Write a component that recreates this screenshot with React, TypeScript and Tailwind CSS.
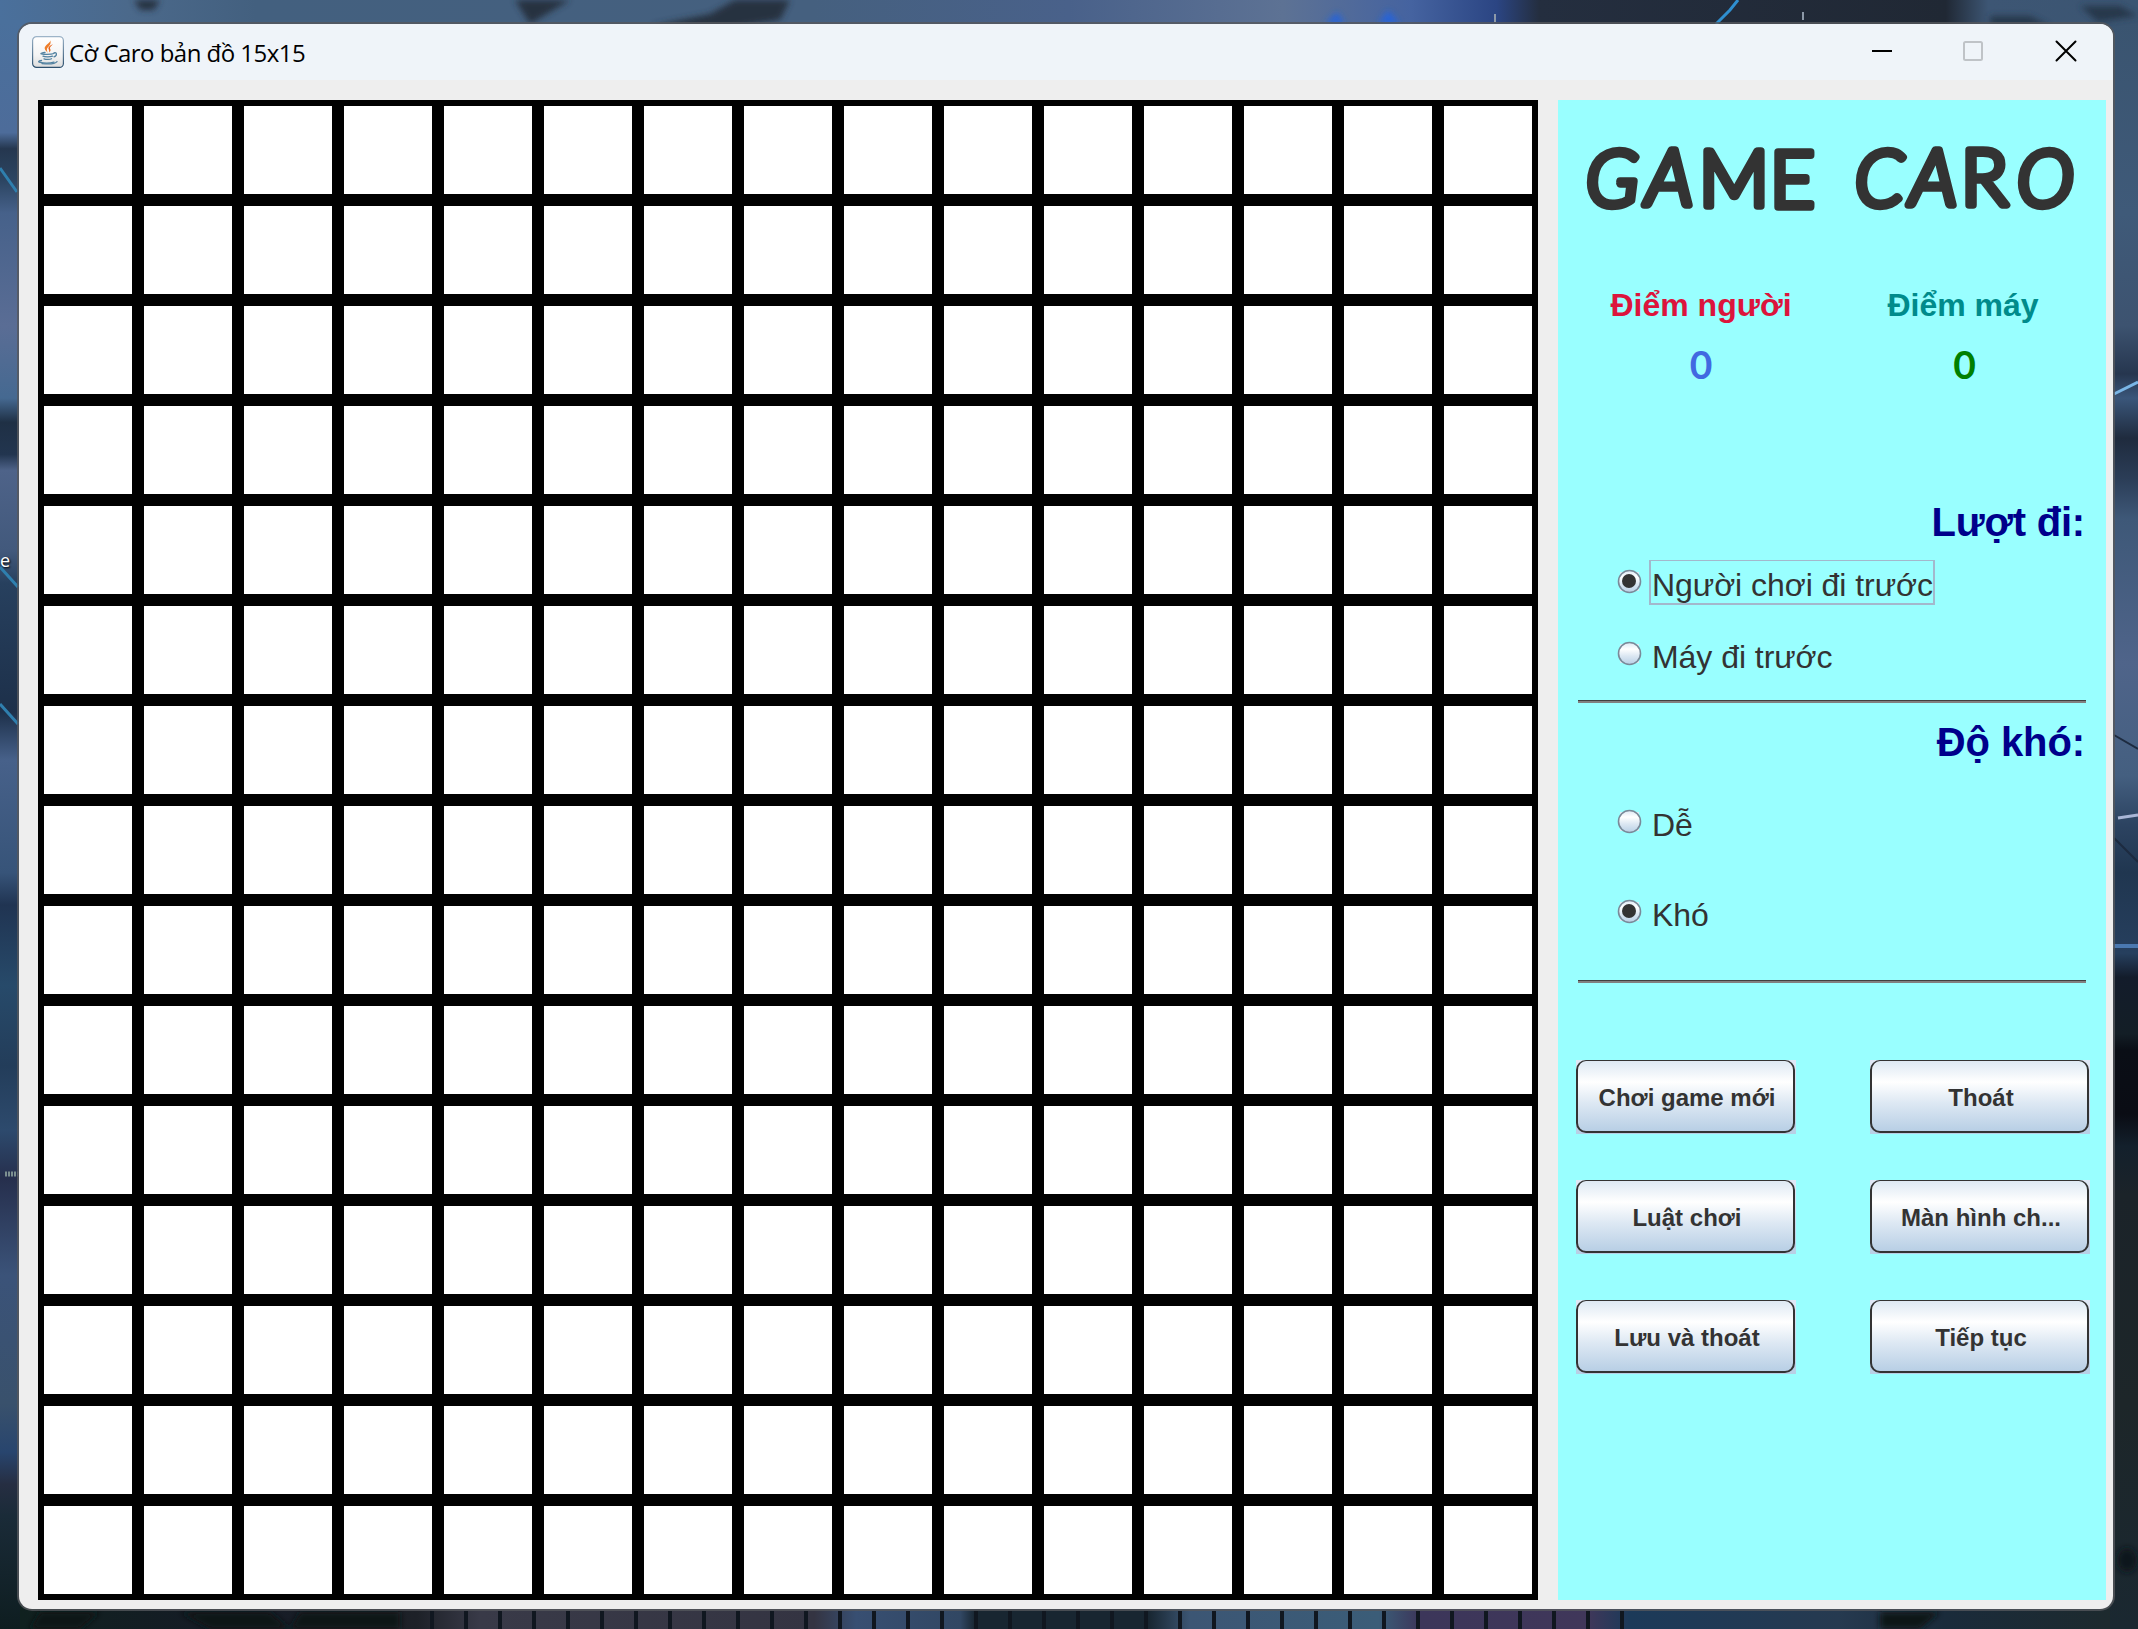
import React from "react";

const CELLS = Array.from({ length: 225 }, (_, i) => i);

const BUTTONS = [
  "Chơi game mới",
  "Thoát",
  "Luật chơi",
  "Màn hình ch...",
  "Lưu và thoát",
  "Tiếp tục",
];

function Wallpaper() {
  const slats = Array.from({ length: 36 }, (_, i) => 430 + i * 34);
  return (
    <svg className="absolute inset-0" width="2138" height="1629" viewBox="0 0 2138 1629" aria-hidden="true">
      <defs>
        <linearGradient id="top" x1="0" x2="1" y1="0" y2="0">
          <stop offset="0" stopColor="#4a709c" />
          <stop offset="0.06" stopColor="#4b698b" />
          <stop offset="0.12" stopColor="#43607f" />
          <stop offset="0.38" stopColor="#45607f" />
          <stop offset="0.5" stopColor="#49618a" />
          <stop offset="0.6" stopColor="#5d7294" />
          <stop offset="0.66" stopColor="#4563a0" />
          <stop offset="0.7" stopColor="#2b4583" />
          <stop offset="0.72" stopColor="#242e3f" />
          <stop offset="0.91" stopColor="#202834" />
          <stop offset="0.93" stopColor="#3d5674" />
          <stop offset="1" stopColor="#3b5572" />
        </linearGradient>
        <linearGradient id="left" x1="0" x2="0" y1="0" y2="1">
          <stop offset="0" stopColor="#4a709c" />
          <stop offset="0.07" stopColor="#4d6c9a" />
          <stop offset="0.08" stopColor="#25374f" />
          <stop offset="0.1" stopColor="#2c4562" />
          <stop offset="0.12" stopColor="#46618a" />
          <stop offset="0.19" stopColor="#5a6d95" />
          <stop offset="0.235" stopColor="#456991" />
          <stop offset="0.25" stopColor="#1f3045" />
          <stop offset="0.27" stopColor="#22354f" />
          <stop offset="0.28" stopColor="#4e6389" />
          <stop offset="0.33" stopColor="#42597c" />
          <stop offset="0.35" stopColor="#27405e" />
          <stop offset="0.43" stopColor="#1d304a" />
          <stop offset="0.46" stopColor="#47618a" />
          <stop offset="0.53" stopColor="#375479" />
          <stop offset="0.55" stopColor="#203452" />
          <stop offset="0.6" stopColor="#274a6a" />
          <stop offset="0.65" stopColor="#233d5a" />
          <stop offset="0.69" stopColor="#2d4a6d" />
          <stop offset="0.72" stopColor="#262f4d" />
          <stop offset="0.78" stopColor="#3b5379" />
          <stop offset="0.86" stopColor="#39516c" />
          <stop offset="0.89" stopColor="#28456e" />
          <stop offset="0.91" stopColor="#262e42" />
          <stop offset="0.93" stopColor="#1a2b38" />
          <stop offset="1" stopColor="#0e1d20" />
        </linearGradient>
        <linearGradient id="right" x1="0" x2="0" y1="0" y2="1">
          <stop offset="0" stopColor="#3a5470" />
          <stop offset="0.12" stopColor="#3f5a79" />
          <stop offset="0.19" stopColor="#3d5370" />
          <stop offset="0.22" stopColor="#26364f" />
          <stop offset="0.235" stopColor="#3a567a" />
          <stop offset="0.26" stopColor="#1f2b3e" />
          <stop offset="0.285" stopColor="#2b3d57" />
          <stop offset="0.31" stopColor="#3e5878" />
          <stop offset="0.4" stopColor="#4f648a" />
          <stop offset="0.47" stopColor="#445f80" />
          <stop offset="0.5" stopColor="#2c4361" />
          <stop offset="0.53" stopColor="#203650" />
          <stop offset="0.58" stopColor="#263f5e" />
          <stop offset="0.595" stopColor="#131c2b" />
          <stop offset="0.63" stopColor="#131e26" />
          <stop offset="0.64" stopColor="#0a0e16" />
          <stop offset="0.68" stopColor="#0a0c14" />
          <stop offset="0.7" stopColor="#13202c" />
          <stop offset="0.73" stopColor="#1b2329" />
          <stop offset="0.86" stopColor="#1d2629" />
          <stop offset="1" stopColor="#1a2831" />
        </linearGradient>
        <linearGradient id="bottom" x1="0" x2="1" y1="0" y2="0">
          <stop offset="0" stopColor="#10211f" />
          <stop offset="0.1" stopColor="#151b26" />
          <stop offset="0.19" stopColor="#1d2128" />
          <stop offset="0.22" stopColor="#393a48" />
          <stop offset="0.38" stopColor="#343442" />
          <stop offset="0.4" stopColor="#384f72" />
          <stop offset="0.45" stopColor="#314763" />
          <stop offset="0.457" stopColor="#182631" />
          <stop offset="0.54" stopColor="#182631" />
          <stop offset="0.56" stopColor="#3c5674" />
          <stop offset="0.65" stopColor="#3b5d78" />
          <stop offset="0.67" stopColor="#3c365a" />
          <stop offset="0.75" stopColor="#40375a" />
          <stop offset="0.77" stopColor="#1c3a59" />
          <stop offset="0.87" stopColor="#263a50" />
          <stop offset="0.92" stopColor="#1a2b3b" />
          <stop offset="1" stopColor="#1d2a2e" />
        </linearGradient>
        <filter id="soft">
          <feGaussianBlur stdDeviation="3" />
        </filter>
      </defs>
      <rect width="2138" height="40" fill="url(#top)" />
      <rect y="20" width="40" height="1609" fill="url(#left)" />
      <rect x="2090" y="20" width="48" height="1609" fill="url(#right)" />
      <rect x="20" y="1590" width="2090" height="39" fill="url(#bottom)" />
      <g filter="url(#soft)">
        <path d="M134 0h26l-6 10h-14z M515 0h55l-20 12-20 12z M735 0h55l-10 20-50 8-80-2 60-12z" fill="#27303f" />
        <path d="M1325 24l12-12 8 12z M1378 24l10-14 12 14z" fill="#2563d8" />
        <path d="M1990 16h40l20 10h-60z M2080 6h40l18 10-40 6z" fill="#27374c" />
        <path d="M40 1612h60l-20 17H30z M180 1612h90l20 17h-80z M300 1612h100v17h-110z" fill="#0d1718" />
        <path d="M1880 1612h60l-20 17h-40z" fill="#0b1816" />
        <ellipse cx="2127" cy="1560" rx="10" ry="12" fill="#10151b" />
      </g>
      <g fill="#101720">
        {slats.map((x) => (
          <rect key={x} x={x} y="1611" width="4" height="18" />
        ))}
      </g>
      <path d="M1738 0l-8 10-14 14" stroke="#2f8fd0" strokeWidth="3" fill="none" />
      <path d="M1495 14v8M1803 12v8" stroke="#8d99a8" strokeWidth="2" />
      <path d="M0 168l17 24M0 567l18 20M0 704l18 20" stroke="#2f7fae" strokeWidth="3" />
      <path d="M2114 394l24-12" stroke="#7ab6e6" strokeWidth="3" />
      <path d="M2118 818l20-3" stroke="#a9b6d6" strokeWidth="3" />
      <path d="M2114 735l24 14M2114 838l24 24" stroke="#1d2b40" strokeWidth="2" />
      <rect x="2112" y="944" width="26" height="4" fill="#4a78b0" />
      <path d="M5 1174h13" stroke="#7c9090" strokeWidth="5" strokeDasharray="2 1" />
      <path d="M2 1500h14" stroke="#b08476" strokeWidth="6" opacity=".8" filter="url(#soft)" />
    </svg>
  );
}

function JavaIcon() {
  return (
    <svg width="32" height="32" viewBox="0 0 32 32" aria-hidden="true">
      <defs>
        <linearGradient id="jbg" x1="0" x2="0" y1="0" y2="1">
          <stop offset="0" stopColor="#ffffff" />
          <stop offset="0.6" stopColor="#f4f4f4" />
          <stop offset="1" stopColor="#dcdcdc" />
        </linearGradient>
        <linearGradient id="jst" x1="0" x2="0" y1="0" y2="1">
          <stop offset="0" stopColor="#9db4c8" />
          <stop offset="1" stopColor="#2d506e" />
        </linearGradient>
      </defs>
      <rect x="0.6" y="0.6" width="30.8" height="30.8" rx="4" fill="url(#jbg)" stroke="url(#jst)" strokeWidth="1.2" />
      <path d="M18.2 4c1 3-6 5-5.500 8.600.2 1.700 2 3 3 4.400-1.300-3.700-1-4.500 1-6.500 1.700-1.800 2.500-3.700 1.500-6.500z" fill="#ee7d28" />
      <path d="M21 8.200c-2.500.8-4.800 2.300-4.600 4.300.1 1.300 1.300 1.600.7 4 1.600-1.300 1.800-2.500 1-3.700-.8-1.300 1-3 2.900-4.600z" fill="#e8641b" />
      <g fill="none" stroke="#5382a1" strokeWidth="1.300" strokeLinecap="round">
        <path d="M13 16.500c-2.500.3-4.500.8-4 1.300 1 .8 10 .8 13-.3" />
        <path d="M22 16.800c3-1 3.500 2.800 0 4" />
        <path d="M11 20.200c2 .9 7 .9 9.500 0" />
        <path d="M12 22.800c2 .8 6 .8 7.500 0" />
        <path d="M9.500 24.500c-3.500.6-3.500 1.500-1.500 1.900 4 .8 10.500.7 14-.3" />
        <path d="M10 27.600c6 .6 13 .4 15-2" />
      </g>
    </svg>
  );
}

function TitleBar() {
  return (
    <header className="flex h-14 items-center bg-[#eff4f9] pl-[13px]">
      <JavaIcon />
      <span className="ml-[5px] whitespace-nowrap pt-px font-['Open_Sans','Noto_Sans',sans-serif] text-[24px] leading-[32px] tracking-[-0.53px] text-black">
        Cờ Caro bản đồ 15x15
      </span>
      <svg className="ml-auto" width="242" height="56" viewBox="0 0 242 56" fill="none" aria-hidden="true">
        <path d="M1 27h20" stroke="#000" strokeWidth="2" />
        <rect x="93" y="18" width="18" height="18" rx="1.500" stroke="#bfc3c7" strokeWidth="2" />
        <path d="M185.500 17.500l19 19M204.500 17.500l-19 19" stroke="#000" strokeWidth="2" strokeLinecap="round" />
      </svg>
    </header>
  );
}

function Board() {
  return (
    <div className="grid h-[1500px] w-[1500px] shrink-0 grid-cols-15 grid-rows-15">
      {CELLS.map((i) => (
        <div key={i} className="border-6 border-black bg-white" />
      ))}
    </div>
  );
}

function GameLogo() {
  return (
    <svg width="548" height="185" viewBox="0 0 548 185" className="shrink-0" aria-label="GAME CARO">
      <text
        x="28 88 141 212 265 297 352 403 459"
        y="106 105 106 107 106 106 105 105 106"
        fill="#333333"
        stroke="#333333"
        strokeWidth="7.5"
        strokeLinejoin="round"
        className="font-['Lato',sans-serif] text-[77px] font-light"
      >
        <tspan fontStyle="italic">GA</tspan>
        <tspan>ME </tspan>
        <tspan fontStyle="italic">CA</tspan>
        <tspan>R</tspan>
        <tspan fontStyle="italic">O</tspan>
      </text>
    </svg>
  );
}

function Radio({ label, checked = false, focused = false }: { label: string; checked?: boolean; focused?: boolean }) {
  return (
    <div className="flex h-[45px] items-start pl-[59px]">
      <svg className="mt-[9px] shrink-0" width="25" height="25" viewBox="0 0 25 25" aria-hidden="true">
        <defs>
          <linearGradient id="radio" x1="0" x2="0" y1="0" y2="1">
            <stop offset="0" stopColor="#dde8f3" />
            <stop offset="0.3" stopColor="#ffffff" />
            <stop offset="0.6" stopColor="#dde8f3" />
            <stop offset="1" stopColor="#b8cfe5" />
          </linearGradient>
        </defs>
        <path d="M3 3h19v19H3z" fill="#dcecf5" />
        <circle cx="12.500" cy="12.500" r="11" fill="url(#radio)" stroke="#7a8a99" strokeWidth="1.600" />
        {checked && <circle cx="12" cy="12" r="7" fill="#333333" />}
      </svg>
      <span
        className={
          focused
            ? "ml-[7px] h-[45px] w-[286px] whitespace-nowrap border-2 border-t-1 border-[#a3b8cc] pl-px pt-1 text-[32px] leading-[40px] tracking-[-0.05px]"
            : "ml-[7px] h-[45px] whitespace-nowrap border-2 border-t-1 border-transparent pl-px pt-1 text-[32px] leading-[40px] tracking-[-0.05px]"
        }
      >
        {label}
      </span>
    </div>
  );
}

function Separator() {
  return <div className="mx-5 h-[3px] shrink-0 border-t border-[#404040] bg-[#808080]" />;
}

function SidePanel() {
  return (
    <aside className="ml-5 flex h-[1500px] w-[548px] shrink-0 flex-col bg-[#99ffff] font-['Liberation_Sans',Arial,sans-serif] text-[#333333]">
      <GameLogo />
      <div className="flex text-center font-bold">
        <div className="ml-[43px] w-[200px]">
          <div className="whitespace-nowrap text-[32px] leading-[40px] text-[#dc143c]">Điểm người</div>
          <div className="mt-[15px] font-['Lato',sans-serif] text-[39px] leading-[48px] text-[#4169e1]">0</div>
        </div>
        <div className="ml-[62px] w-[200px]">
          <div className="whitespace-nowrap text-[32px] leading-[40px] text-[#008b8b]">Điểm máy</div>
          <div className="mt-[15px] pl-[3px] font-['Lato',sans-serif] text-[39px] leading-[48px] text-[#008000]">0</div>
        </div>
      </div>

      <h2 className="mt-[110px] pr-[21px] text-right text-[40px] font-bold leading-[48px] tracking-[-0.2px] text-[#00008b]">Lượt đi:</h2>
      <div className="mt-[14px]">
        <Radio label="Người chơi đi trước" checked focused />
      </div>
      <div className="mb-[23px] mt-[27px]">
        <Radio label="Máy đi trước" />
      </div>
      <Separator />

      <h2 className="mt-[15px] pr-[21px] text-right text-[40px] font-bold leading-[48px] tracking-[-0.1px] text-[#00008b]">Độ khó:</h2>
      <div className="mt-[34px]">
        <Radio label="Dễ" />
      </div>
      <div className="my-[45px]">
        <Radio label="Khó" checked />
      </div>
      <Separator />

      <div className="ml-[18px] mt-[77px] grid grid-cols-[220px_220px] gap-x-[74px] gap-y-[46px]">
        {BUTTONS.map((label) => (
          <div key={label} className="h-[74px] bg-linear-to-b from-[#e0e8f6] to-[#b8cfe5] pb-px pr-px">
            <button className="flex h-full w-full items-center justify-center whitespace-nowrap rounded-[10px] border-2 border-t-1 border-[#333333] bg-[linear-gradient(180deg,#dde8f3_0%,#ffffff_30%,#dde8f3_60%,#b8cfe5_100%)] pl-[3px] pt-[3px] text-[24px] font-bold leading-[32px]">
              {label}
            </button>
          </div>
        ))}
      </div>
    </aside>
  );
}

export default function App() {
  return (
    <div className="relative h-[1629px] w-[2138px] overflow-hidden pl-[17px] pt-[22px]">
      <Wallpaper />
      <span className="absolute left-0 top-[548px] font-['Open_Sans',sans-serif] text-[18px] leading-[24px] text-white [text-shadow:1px_1px_2px_#000]">
        e
      </span>
      <div className="relative w-[2098px] rounded-[15px] bg-[#55585c]/80 p-[2px]">
        <main className="h-[1585px] overflow-hidden rounded-[13px] bg-[#eeeeee]">
          <TitleBar />
          <div className="flex pl-[19px] pt-5">
            <Board />
            <SidePanel />
          </div>
        </main>
      </div>
    </div>
  );
}
